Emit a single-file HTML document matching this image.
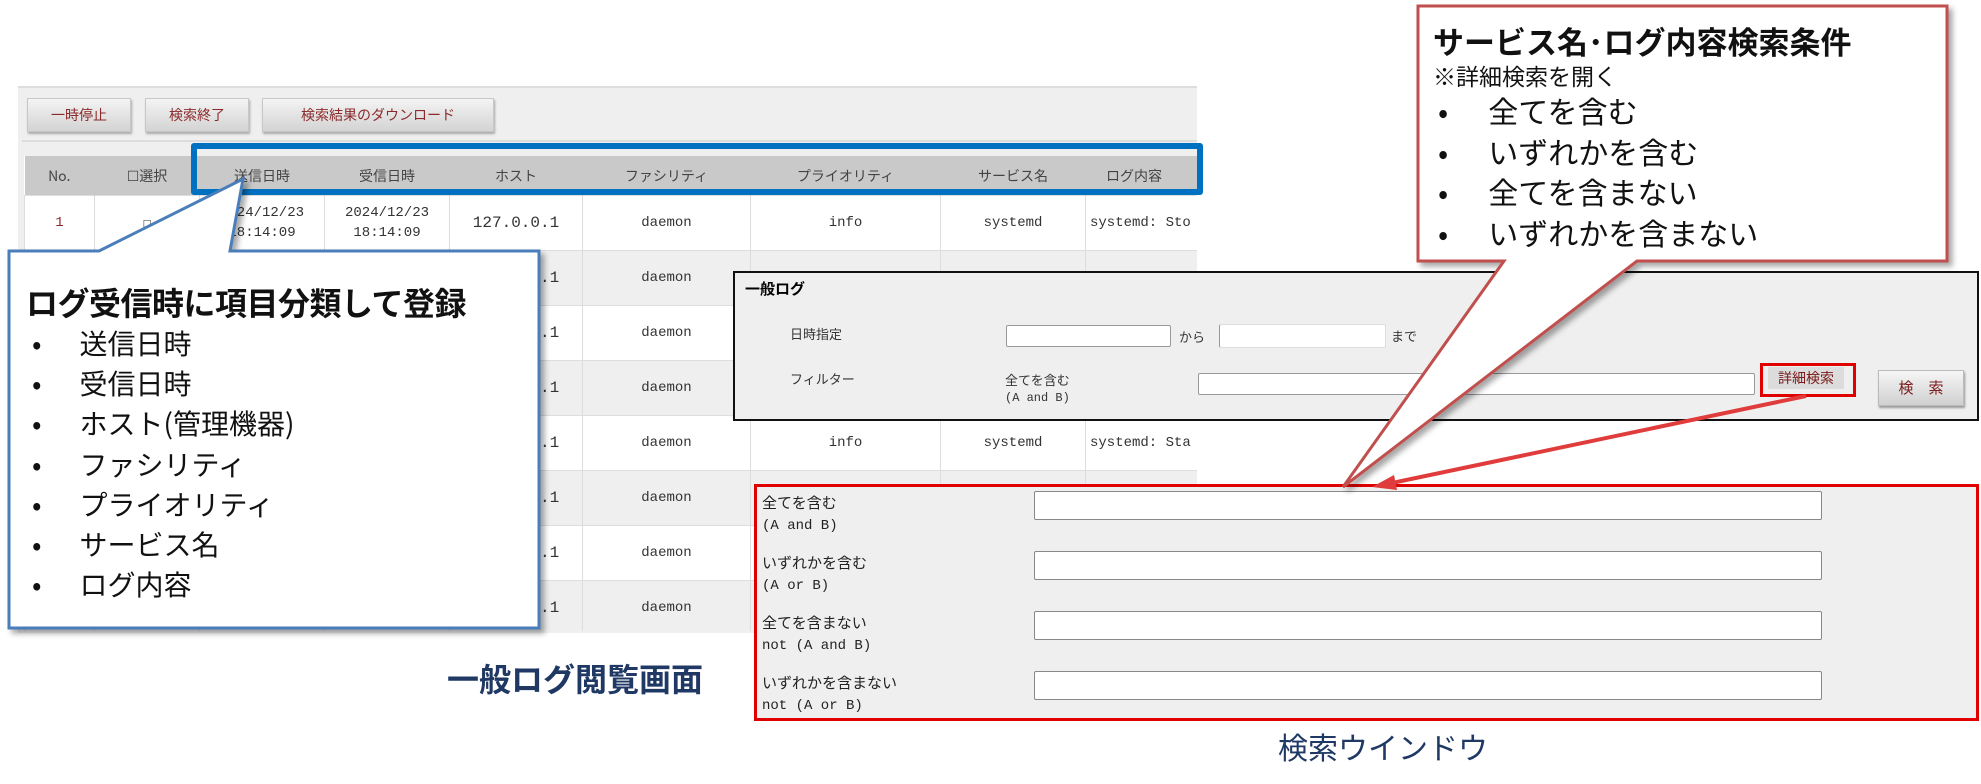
<!DOCTYPE html>
<html><head><meta charset="utf-8"><style>
body{margin:0;width:1981px;height:784px;background:#fff;position:relative;overflow:hidden;font-family:"Liberation Sans","Noto Sans CJK JP",sans-serif;}
.a{position:absolute;}
.btn{position:absolute;top:98px;height:32px;background:linear-gradient(#f4f4f4,#d4d4d4);border:1px solid #c8c8c8;box-shadow:1px 2px 2px #aaa;color:#8b2a2a;font-size:14px;line-height:32px;text-align:center;}
table{border-collapse:collapse;font-family:"Liberation Mono","Noto Sans CJK JP",monospace;font-size:14px;color:#333;}
td{border:1px solid #ddd;text-align:center;height:54px;padding:0;white-space:nowrap;overflow:hidden;}
th{background:#c9c9c9;font-weight:normal;color:#444;height:37px;border-right:1px solid #c9c9c9;font-family:"Noto Sans CJK JP",sans-serif;font-size:14px;}
tr.g td{background:#efefef;}
.inp{position:absolute;background:#fff;border:1px solid #999;border-radius:2px;}
.sm{font-size:13px;color:#333;font-family:"Noto Sans CJK JP",sans-serif;}
.lb{position:absolute;left:762px;font-size:15px;line-height:21px;color:#222;font-family:"Noto Sans CJK JP",sans-serif;}
.lb span{font-family:"Liberation Mono",monospace;font-size:14px;}
.cl{position:absolute;font-family:"Noto Sans CJK JP",sans-serif;color:#111;white-space:nowrap;}
</style></head><body>
<div class="a" style="left:18px;top:86px;width:1179px;height:545px;background:#efefef;border-top:2px solid #ddd;"></div>
<div class="btn" style="left:27px;width:102px;">一時停止</div>
<div class="btn" style="left:145px;width:102px;">検索終了</div>
<div class="btn" style="left:262px;width:230px;">検索結果のダウンロード</div>
<div class="a" style="left:22px;top:140px;width:1175px;height:2px;background:#ddd;"></div>
<div class="a" style="left:24px;top:156px;width:1173px;height:475px;overflow:hidden;background:#fff;">
<table style="width:1300px;table-layout:fixed;">
<colgroup><col style="width:70px"><col style="width:105px"><col style="width:125px"><col style="width:125px"><col style="width:133px"><col style="width:168px"><col style="width:190px"><col style="width:145px"><col style="width:239px"></colgroup>
<tr><th>No.</th><th>☐選択</th><th>送信日時</th><th>受信日時</th><th>ホスト</th><th>ファシリティ</th><th>プライオリティ</th><th>サービス名</th><th style="text-align:left;padding-left:20px">ログ内容</th></tr>
<tr><td style="color:#8b2a2a">1</td><td>☐</td><td style="line-height:20px">2024/12/23<br>18:14:09</td><td style="line-height:20px">2024/12/23<br>18:14:09</td><td style="font-size:16px">127.0.0.1</td><td>daemon</td><td>info</td><td>systemd</td><td style="text-align:left;padding-left:4px">systemd: Sto</td></tr>
<tr class="g"><td></td><td></td><td></td><td></td><td style="font-size:16px">127.0.0.1</td><td>daemon</td><td>info</td><td>systemd</td><td style="text-align:left;padding-left:4px">systemd: Rem</td></tr>
<tr><td></td><td></td><td></td><td></td><td style="font-size:16px">127.0.0.1</td><td>daemon</td><td>info</td><td>systemd</td><td style="text-align:left;padding-left:4px">systemd: Sta</td></tr>
<tr class="g"><td></td><td></td><td></td><td></td><td style="font-size:16px">127.0.0.1</td><td>daemon</td><td>info</td><td>systemd</td><td style="text-align:left;padding-left:4px">systemd: Sta</td></tr>
<tr><td></td><td></td><td></td><td></td><td style="font-size:16px">127.0.0.1</td><td>daemon</td><td>info</td><td>systemd</td><td style="text-align:left;padding-left:4px">systemd: Sta</td></tr>
<tr class="g"><td></td><td></td><td></td><td></td><td style="font-size:16px">127.0.0.1</td><td>daemon</td><td>info</td><td>systemd</td><td style="text-align:left;padding-left:4px">systemd: Sta</td></tr>
<tr><td></td><td></td><td></td><td></td><td style="font-size:16px">127.0.0.1</td><td>daemon</td><td>info</td><td>systemd</td><td style="text-align:left;padding-left:4px">systemd: Sta</td></tr>
<tr class="g"><td></td><td></td><td></td><td></td><td style="font-size:16px">127.0.0.1</td><td>daemon</td><td>info</td><td>systemd</td><td style="text-align:left;padding-left:4px">systemd: Sta</td></tr>
</table></div>
<div class="a" style="left:191px;top:143px;width:1000px;height:40px;border:6px solid #0070c0;border-radius:3px;"></div>

<div class="a" style="left:733px;top:271px;width:1242px;height:146px;background:#efefef;border:2px solid #111;"></div>
<div class="a" style="left:745px;top:278px;font-size:15px;font-weight:bold;font-family:'Noto Sans CJK JP',sans-serif;">一般ログ</div>
<div class="a sm" style="left:790px;top:324px;">日時指定</div>
<div class="inp" style="left:1006px;top:325px;width:163px;height:20px;"></div>
<div class="a sm" style="left:1179px;top:327px;">から</div>
<div class="inp" style="left:1219px;top:324px;width:165px;height:22px;border-color:#ddd #ddd #ddd #999;"></div>
<div class="a sm" style="left:1391px;top:326px;">まで</div>
<div class="a sm" style="left:790px;top:369px;">フィルター</div>
<div class="a sm" style="left:1005px;top:372px;line-height:16px;">全てを含む<br><span style="font-family:'Liberation Mono',monospace;font-size:12px">(A and B)</span></div>
<div class="inp" style="left:1198px;top:373px;width:555px;height:20px;"></div>
<div class="a" style="left:1760px;top:363px;width:90px;height:28px;border:3px solid #e00000;"></div>
<div class="a" style="left:1768px;top:367px;width:76px;height:22px;background:#dcdcdc;color:#7a1a1a;font-size:14px;line-height:22px;text-align:center;font-family:'Noto Sans CJK JP',sans-serif;">詳細検索</div>
<div class="a" style="left:1878px;top:370px;width:84px;height:34px;background:linear-gradient(#f6f6f6,#d0d0d0);border:1px solid #bbb;box-shadow:1px 2px 2px #999;color:#7a1a1a;font-size:15px;line-height:34px;text-align:center;font-family:'Noto Sans CJK JP',sans-serif;">検　索</div>

<div class="a" style="left:754px;top:484px;width:1219px;height:231px;background:#efefef;border:3px solid #e00000;"></div>
<div class="lb" style="top:492px;">全てを含む<br><span>(A and B)</span></div>
<div class="lb" style="top:552px;">いずれかを含む<br><span>(A or B)</span></div>
<div class="lb" style="top:612px;">全てを含まない<br><span>not (A and B)</span></div>
<div class="lb" style="top:672px;">いずれかを含まない<br><span>not (A or B)</span></div>
<div class="inp" style="left:1034px;top:491px;width:786px;height:27px;border:1px solid #888;"></div>
<div class="inp" style="left:1034px;top:551px;width:786px;height:27px;border:1px solid #888;"></div>
<div class="inp" style="left:1034px;top:611px;width:786px;height:27px;border:1px solid #888;"></div>
<div class="inp" style="left:1034px;top:671px;width:786px;height:27px;border:1px solid #888;"></div>

<svg class="a" style="left:0;top:0" width="1981" height="784">
<defs><filter id="s" x="-5%" y="-5%" width="115%" height="115%"><feDropShadow dx="4" dy="4" stdDeviation="3" flood-color="#000" flood-opacity="0.35"/></filter></defs>
<path d="M9,251 L99,251 L243,179 L230,251 L539,251 L539,628 L9,628 Z" fill="#fff" stroke="#4a7ebb" stroke-width="3" filter="url(#s)"/>
<path d="M1418,6 L1947,6 L1947,261 L1637,261 L1343,487 L1504,261 L1418,261 Z" fill="#fff" stroke="#c0504d" stroke-width="3" filter="url(#s)"/>
<line x1="1806" y1="396" x2="1392" y2="483" stroke="#e03c3c" stroke-width="4"/>
<polygon points="1372,487 1394,475 1397,490" fill="#e03c3c"/>
</svg>
<div class="cl" style="left:26px;top:280px;font-size:32px;line-height:45px;font-weight:bold;letter-spacing:-0.5px;">ログ受信時に項目分類して登録</div>
<div class="cl" style="left:32px;top:323px;font-size:28px;line-height:40.2px;">
<div>•<span style="margin-left:38px">送信日時</span></div>
<div>•<span style="margin-left:38px">受信日時</span></div>
<div>•<span style="margin-left:38px">ホスト(管理機器)</span></div>
<div>•<span style="margin-left:38px">ファシリティ</span></div>
<div>•<span style="margin-left:38px">プライオリティ</span></div>
<div>•<span style="margin-left:38px">サービス名</span></div>
<div>•<span style="margin-left:38px">ログ内容</span></div>
</div>
<div class="cl" style="left:1433px;top:18px;font-size:31px;line-height:45px;font-weight:bold;">サービス名･ログ内容検索条件</div>
<div class="cl" style="left:1433px;top:58px;font-size:23px;line-height:35px;">※詳細検索を開く</div>
<div class="cl" style="left:1438px;top:90px;font-size:30px;line-height:40.5px;">
<div>•<span style="margin-left:40px">全てを含む</span></div>
<div>•<span style="margin-left:40px">いずれかを含む</span></div>
<div>•<span style="margin-left:40px">全てを含まない</span></div>
<div>•<span style="margin-left:40px">いずれかを含まない</span></div>
</div>
<div class="cl" style="left:447px;top:655px;font-size:32px;font-weight:bold;color:#1f3864;">一般ログ閲覧画面</div>
<div class="cl" style="left:1278px;top:724px;font-size:30px;color:#1f3864;">検索ウインドウ</div>
</body></html>
